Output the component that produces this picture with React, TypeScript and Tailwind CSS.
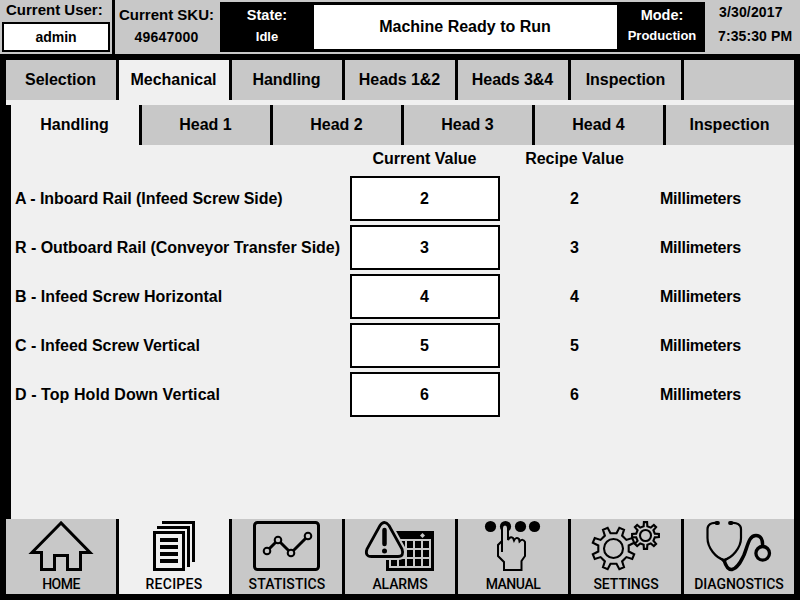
import type { ReactNode } from 'react';

const topTabs = ['Selection', 'Mechanical', 'Handling', 'Heads 1&2', 'Heads 3&4', 'Inspection', ''];
const subTabs = ['Handling', 'Head 1', 'Head 2', 'Head 3', 'Head 4', 'Inspection'];

const rows = [
  { label: 'A - Inboard Rail (Infeed Screw Side)', value: 2, tracking: 'tracking-[-0.06px]' },
  { label: 'R - Outboard Rail (Conveyor Transfer Side)', value: 3, tracking: 'tracking-[-0.03px]' },
  { label: 'B - Infeed Screw Horizontal', value: 4, tracking: 'tracking-normal' },
  { label: 'C - Infeed Screw Vertical', value: 5, tracking: 'tracking-[-0.04px]' },
  { label: 'D - Top Hold Down Vertical', value: 6, tracking: 'tracking-[0.07px]' },
];

// Outline of a gear with straight-sided teeth.
function gear(cx: number, cy: number, teeth: number, inner: number, outer: number, offset: number) {
  const step = (Math.PI * 2) / teeth;
  const points: string[] = [];
  for (let i = 0; i < teeth; i++) {
    const a = offset + i * step;
    const corners = [
      [-0.25, inner],
      [-0.15, outer],
      [0.15, outer],
      [0.25, inner],
    ];
    for (const [f, r] of corners) {
      points.push(`${(cx + r * Math.sin(a + f * step)).toFixed(2)},${(cy - r * Math.cos(a + f * step)).toFixed(2)}`);
    }
  }
  return points.join(' ');
}

function Icon({ x, children }: { x: number; children: ReactNode }) {
  return (
    <svg
      className="block h-[57px] w-full"
      viewBox={`${x} 519 110 57`}
      fill="none"
      stroke="#000"
      strokeWidth="3"
    >
      {children}
    </svg>
  );
}

const calendarCells = [541, 550, 559].flatMap((y) => [391, 399, 407, 415, 423].map((x) => ({ x, y })));

const nav = [
  {
    label: 'HOME',
    tracking: 'tracking-[-0.5px]',
    icon: (
      <Icon x={6}>
        <path d="M61 523L32 552.5H41.5V569.5H54.5V555.5H67.5V569.5H80.5V552.5H90Z" />
      </Icon>
    ),
  },
  {
    label: 'RECIPES',
    tracking: 'tracking-[0.25px]',
    icon: (
      <Icon x={119}>
        <path d="M154.5 532.5H183.5V569.5H154.5ZM157 527.5H188.5V567M162 522.5H193.5V562" />
        <path d="M160 540H178M160 547H178M160 554H178M160 561H178" strokeWidth="4" />
      </Icon>
    ),
  },
  {
    label: 'STATISTICS',
    tracking: 'tracking-[0.1px]',
    icon: (
      <Icon x={232}>
        <rect x="254.5" y="522.5" width="64" height="47" rx="3" />
        <path d="M267 551L278 540L291 553L308 536" />
        <g fill="#c8c8c8" strokeWidth="2">
          <circle cx="267" cy="551" r="3.3" />
          <circle cx="278" cy="540" r="3.3" />
          <circle cx="291" cy="553" r="3.3" />
          <circle cx="308" cy="536" r="3.3" />
        </g>
      </Icon>
    ),
  },
  {
    label: 'ALARMS',
    tracking: 'tracking-[-0.1px]',
    icon: (
      <Icon x={345}>
        <path d="M387.5 535V569.5H432.5V535" />
        <path d="M386 535H434" strokeWidth="8" />
        <g fill="#000" stroke="none">
          {calendarCells.map((c) => (
            <rect key={`${c.x}-${c.y}`} x={c.x} y={c.y} width="6" height="7" />
          ))}
        </g>
        <path d="M422.5 533L425 535.5L422.5 538L420 535.5Z" fill="#c8c8c8" stroke="none" />
        <path
          d="M380 525.5Q384.4 519.5 389 525.5L402 549Q404.5 556.5 398 556.5H371.5Q364.5 556.5 367 549Z"
          fill="#c8c8c8"
          stroke="#c8c8c8"
          strokeWidth="7"
        />
        <path
          d="M380 525.5Q384.4 519.5 389 525.5L402 549Q404.5 556.5 398 556.5H371.5Q364.5 556.5 367 549Z"
          strokeWidth="2.8"
        />
        <path d="M384.5 530V544" strokeWidth="4.5" strokeLinecap="round" />
        <circle cx="384.5" cy="551" r="2.5" fill="#000" stroke="none" />
      </Icon>
    ),
  },
  {
    label: 'MANUAL',
    tracking: 'tracking-[-0.45px]',
    icon: (
      <Icon x={458}>
        <g fill="#000" stroke="none">
          <circle cx="490.5" cy="526.5" r="5.6" />
          <circle cx="505.5" cy="526.5" r="5.6" />
          <circle cx="520.5" cy="526.5" r="5.6" />
          <circle cx="534.5" cy="526.5" r="5.6" />
        </g>
        <path
          d="M502 552V528Q502 524.5 505 524.5Q508 524.5 508 528V540Q510 536 513 538L514 540.5Q516 536.5 519 539L519.5 541.5Q523 538 525 542V556L521.5 561V570H504V562L498 556V545L502 541"
          fill="#c8c8c8"
          strokeWidth="2"
        />
      </Icon>
    ),
  },
  {
    label: 'SETTINGS',
    tracking: 'tracking-[-0.05px]',
    icon: (
      <Icon x={571}>
        <g strokeWidth="2.1">
          <polygon points={gear(613.5, 548.5, 8, 15.5, 21.5, Math.PI / 8)} />
          <circle cx="613.5" cy="548.5" r="9.5" />
          <polygon points={gear(645.5, 535.5, 8, 9.5, 13.5, 0)} />
          <circle cx="645.5" cy="535.5" r="5.5" />
        </g>
      </Icon>
    ),
  },
  {
    label: 'DIAGNOSTICS',
    tracking: 'tracking-[-0.05px]',
    icon: (
      <Icon x={684}>
        <path
          d="M717 523C711 522 707.5 525 707.5 529V538C707.5 548 716 558 724 560C732 558 741 548 741 538V529C741 525 737 522 731 523"
          strokeWidth="2.2"
        />
        <path d="M716.5 523H718M730 523H731.5" strokeWidth="3.8" strokeLinecap="round" />
        <path d="M718 557L724 563L730 557L724 559Z" fill="#000" stroke="none" />
        <path
          d="M724 560C726 567 728 570 732 569.5C738 568 741 561 744 555C748 545 749 535.5 756 535.5C761 535.5 763 540 762.5 546"
          strokeWidth="3.5"
        />
        <circle cx="762.7" cy="553.3" r="6.8" strokeWidth="3.3" />
      </Icon>
    ),
  },
];

export default function App() {
  return (
    <div className="flex h-[600px] w-[800px] flex-col overflow-hidden bg-black font-['Liberation_Sans',Arial,sans-serif] text-base leading-5 font-bold text-black">
      <header className="flex h-[54px] bg-[#c8c8c8]">
        <div className="w-28 pl-0.5">
          <div className="h-[22px] pl-1 text-[15px]">Current User:</div>
          <div className="flex h-[30px] w-[108px] items-center justify-center border-2 border-black bg-white text-sm">
            admin
          </div>
        </div>
        <div className="w-[3px] bg-black" />
        <div className="w-[105px] pt-[5px] pr-0.5 text-center text-[15px] whitespace-nowrap">
          <div>Current SKU:</div>
          <div className="pt-0.5 text-sm tracking-[0.2px]">49647000</div>
        </div>
        <div className="mt-0.5 flex h-[50px] w-[485px] bg-black py-[3px] text-white">
          <div className="w-[94px] text-center">
            <div className="text-[14.5px] leading-5">State:</div>
            <div className="pt-0.5 text-[13px] leading-5">Idle</div>
          </div>
          <div className="flex h-11 w-[303px] items-center justify-center bg-white pr-px text-black">
            Machine Ready to Run
          </div>
          <div className="w-[88px] pl-0.5 text-center">
            <div className="text-[14.5px] leading-5">Mode:</div>
            <div className="pt-px text-[13px] leading-5">Production</div>
          </div>
        </div>
        <div className="flex-1 pt-0.5 text-sm whitespace-nowrap">
          <div className="pl-3.5 tracking-[0.15px]">3/30/2017</div>
          <div className="pt-1 pl-[13px] tracking-[0.1px]">7:35:30 PM</div>
        </div>
      </header>

      <nav className="mx-1.5 mt-1.5 flex h-10 gap-[3px]">
        {topTabs.map((tab, i) => (
          <div
            key={i}
            className={`flex w-[110px] items-center justify-center pr-px tracking-[-0.04px] ${i === 1 ? 'bg-[#f0f0f0]' : 'bg-[#c8c8c8]'}`}
          >
            {tab}
          </div>
        ))}
      </nav>
      <div className="mx-1.5 h-[5px] bg-[#f0f0f0]" />
      <nav className="mr-1.5 ml-[11px] flex h-10 gap-[3px]">
        {subTabs.map((tab, i) => (
          <div
            key={tab}
            className={`flex w-32 items-center justify-center pr-px ${i === 0 ? 'bg-[#f0f0f0]' : 'bg-[#c8c8c8]'}`}
          >
            {tab}
          </div>
        ))}
      </nav>

      <main className="mr-1.5 ml-[11px] h-[374px] bg-[#f0f0f0] pt-1 pl-1 whitespace-nowrap">
        <div className="grid h-[27px] grid-cols-[335px_150px_150px_1fr] text-center">
          <span />
          <span className="pr-px">Current Value</span>
          <span className="pr-px">Recipe Value</span>
        </div>
        {rows.map((row) => (
          <div key={row.label} className="mb-1 grid h-[45px] grid-cols-[335px_150px_150px_1fr] items-center text-center">
            <span className={`text-left ${row.tracking}`}>{row.label}</span>
            <span className="flex h-[45px] items-center justify-center border-2 border-black bg-white pr-px">
              {row.value}
            </span>
            <span className="pr-px">{row.value}</span>
            <span className="pl-2.5 text-left tracking-[-0.25px]">Millimeters</span>
          </div>
        ))}
      </main>

      <nav className="mx-1.5 flex h-[75px] gap-[3px]">
        {nav.map((item, i) => (
          <div key={item.label} className={`w-[110px] ${i === 1 ? 'bg-[#f0f0f0]' : 'bg-[#c8c8c8]'}`}>
            {item.icon}
            <div
              className={`text-center font-[Roboto,sans-serif] text-sm leading-4 font-medium ${item.tracking}`}
            >
              {item.label}
            </div>
          </div>
        ))}
      </nav>
    </div>
  );
}
